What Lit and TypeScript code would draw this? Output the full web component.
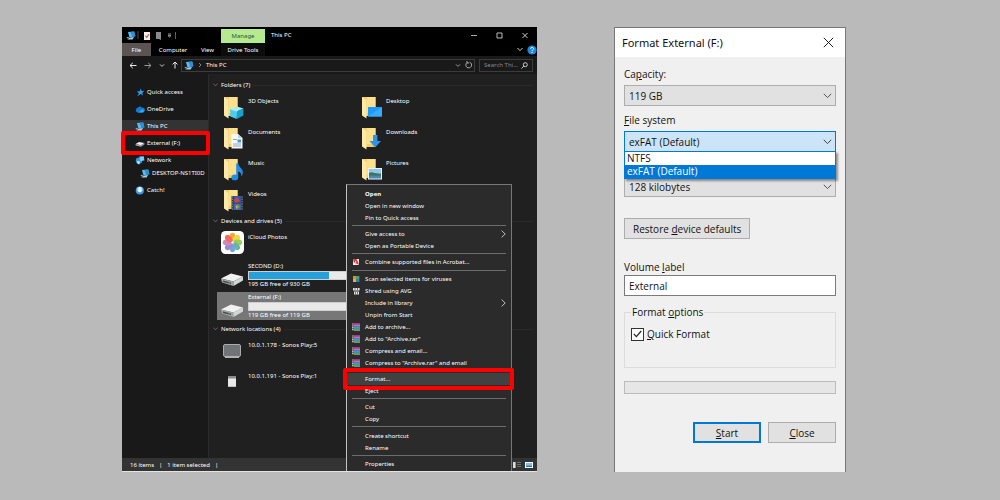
import { LitElement, html, svg, css, nothing } from "lit";
import { customElement, property } from "lit/decorators.js";
import { classMap } from "lit/directives/class-map.js";

const icon = (w: number, h: number, body: unknown) =>
  html`<svg width=${w} height=${h} viewBox="0 0 ${w} ${h}" fill="none" aria-hidden="true">${body}</svg>`;

const folderBase = svg`
  <path d="M4 2 H17.5 V21 H8 Z" fill="#f3cf6c"/>
  <path d="M9 2 H17.5 V18 H9 Z" fill="#fbe08d"/>
  <path d="M4 2 L8.5 5 V23.5 L4 20.5 Z" fill="#ffe9a8"/>`;

const pics: Record<string, unknown> = {
  pc: icon(10, 9, svg`
    <path d="M2 1 L8.2 .4 L9.4 5.2 L3.4 6.2 Z" fill="#57bdf5"/>
    <path d="M4.4 1 L8.2 .4 L9.4 5.2 L6.4 5.7 Z" fill="#2b8fd8"/>
    <path d="M3.6 6.6 L8 6 L6.6 8.4 L1.4 8.6 Z" fill="#a9cbe2"/>
    <path d="M.4 6.2 L2.4 5.8 L3 7 L1.4 7.6 Z" fill="#7fa7c4"/>`),
  star: icon(10, 9, svg`<path d="M5.8 .6 L6.7 3.1 L9.3 3.2 L7.2 4.9 L8 7.6 L5.7 6.1 L2 8.6 L4 5.6 L1.8 3.6 L4.7 3.2 Z" fill="#2e9df0"/>`),
  cloud: icon(10, 9, svg`
    <path d="M2.4 7.4 A2.2 2.2 0 0 1 2 3.3 A3 3 0 0 1 7 2.7 A2.4 2.4 0 0 1 8 7.4 Z" fill="#1479d0"/>
    <path d="M3 7.4 L7.8 4.2 A2 2 0 0 1 8 7.4 Z" fill="#39a9f3"/>`),
  disk: icon(10, 9, svg`
    <path d="M.6 5 L4 3 L9.4 4 L6 6.2 Z" fill="#eef0f2"/>
    <path d="M.6 5 L6 6.2 L9.4 4 V5.6 L6 7.8 L.6 6.6 Z" fill="#9da3a8"/>`),
  network: icon(10, 9, svg`
    <circle cx="4" cy="4.6" r="3.2" fill="#2f9be6"/>
    <path d="M4.4 .6 L8.8 .2 L9.4 4.4 L5.2 5 Z" fill="#7cccf8"/>
    <path d="M2 5 L5 5.6 L4.2 8.4 L2.6 7.8 Z" fill="#c6e6fa"/>`),
  catch: icon(10, 9, svg`
    <circle cx="4.8" cy="4.5" r="4.1" fill="#3f9ae8"/>
    <circle cx="4.8" cy="3.4" r="2.6" fill="#b9dcf8"/>
    <path d="M4.2 1.6 H5.6 V4.2 H7.2 L4.9 6.6 L2.6 4.2 H4.2 Z" fill="#fff"/>`),
  objects: icon(24, 24, svg`${folderBase}
    <path d="M10 14.5 L17 11.5 L23.4 13.4 L16.8 16.6 Z" fill="#a5ecfb"/>
    <path d="M10 14.5 L16.8 16.6 V24 L10.4 21.4 Z" fill="#48cdee"/>
    <path d="M16.8 16.6 L23.4 13.4 V20.6 L16.8 24 Z" fill="#1a9fd0"/>`),
  documents: icon(24, 24, svg`${folderBase}
    <path d="M11.5 8 H18 L22.5 12 V22.5 H11.5 Z" fill="#f6f8fa"/>
    <path d="M18 8 V12 H22.5 Z" fill="#c7d0d8"/>
    <path d="M13 13.5 H17 M13 18 H21 M13 20 H21" stroke="#8eaabc"/>
    <path d="M17.5 13.5 H21 V16.5 H17.5 Z" fill="#3d9fd6"/>`),
  music: icon(24, 24, svg`${folderBase}
    <ellipse cx="14.8" cy="20.4" rx="3.4" ry="2.9" fill="#1e8fe8"/>
    <path d="M16.2 6.5 H18.2 C18.6 10.4 23.4 11.4 22.8 16 C22.6 18 21.6 19 21.2 19.2 C21.8 16 20 15 18.2 14.4 V20.6 H16.2 Z" fill="#1e8fe8"/>`),
  videos: icon(24, 24, svg`${folderBase}
    <path d="M11.5 8 H23 V22 H11.5 Z" fill="#34383e"/>
    <path d="M13.6 8 H20.8 V14.6 H13.6 Z" fill="#3657b8"/>
    <path d="M13.6 15.4 H20.8 V22 H13.6 Z" fill="#4062c4"/>
    <path d="M14 12 L17 9 L20 13 L18 14.6 H15 Z" fill="#c8473c"/>
    <path d="M15 18 L18 16 L20.4 19 L17 21.6 Z" fill="#54a04a"/>
    <path d="M16 17 L18 19 L16 21 Z" fill="#e0a93a"/>
    <path d="M12.5 8.5 V22 M22 8.5 V22" stroke="#8e949b" stroke-dasharray="1 1.4"/>`),
  desktop: icon(24, 24, svg`${folderBase}
    <path d="M10 12 H24 V21.5 H10 Z" fill="#1c9bfa"/>
    <path d="M10 21.5 L24 12 V21.5 Z" fill="#38abff"/>`),
  downloads: icon(24, 24, svg`${folderBase}
    <path d="M15 9 H19.4 V15 H23 L17.2 21.5 L11.4 15 H15 Z" fill="#2f93e6"/>`),
  pictures: icon(24, 24, svg`${folderBase}
    <path d="M10 11 H24 V22.5 H10 Z" fill="#eef3f7"/>
    <path d="M11 12 H23 V17 H11 Z" fill="#8fc7ee"/>
    <path d="M11 16 C14 14 16 17 23 16.6 V19 H11 Z" fill="#3d7358"/>
    <path d="M11 18.6 H23 V21.5 H11 Z" fill="#4a89b4"/>`),
  photos: icon(24, 24, svg`
    <rect x="1" y="0" width="23" height="23" rx="4.5" fill="#fff"/>
    <g opacity=".86">
      ${["#f79a1d", "#e8d51b", "#8ac53f", "#4fae8d", "#5c9bd6", "#8a79c4", "#c678b4", "#ee5347"].map(
        (c, i) => svg`<ellipse cx="12.5" cy="6.2" rx="3" ry="4.4" fill=${c} transform="rotate(${i * 45} 12.5 11.5)"/>`)}
    </g>
    <circle cx="12.5" cy="11.5" r="1.2" fill="#fff" opacity=".7"/>`),
  drive: icon(24, 28, svg`
    <path d="M1 17.5 L11 12.5 L23 15.5 L13.5 20.5 Z" fill="#f1f1f1"/>
    <path d="M1 17.5 L13.5 20.5 V25 L2 21.6 Z" fill="#a3a5a6"/>
    <path d="M13.5 20.5 L23 15.5 V19.5 L13.5 25 Z" fill="#d3d5d6"/>
    <path d="M3 19.6 L11 21.6 V23 L3 20.9 Z" fill="#47494a"/>
    <path d="M8.5 21.4 H10 V22.6 H8.5 Z" fill="#5fc25c"/>`),
  play5: icon(24, 24, svg`
    <rect x="3.5" y="5.5" width="17" height="12" rx="1.5" fill="#717476" stroke="#a9abac"/>
    <path d="M5 18.3 H19" stroke="#d8d8d8"/>`),
  play1: icon(24, 24, svg`
    <path d="M8 6 H16 V17 H8 Z" fill="#e9e9e9"/>
    <path d="M8 6 H16 V8.5 H8 Z" fill="#8b8b8b"/>
    <path d="M8 16.4 H16" stroke="#bdbdbd"/>`),
  pdf: icon(8, 8, svg`
    <path d="M1 1 H7 V7 H1 Z" fill="#f4eaea"/>
    <path d="M1 1 H4.5 L6 4 L7 7 L4.5 5.5 L2 5 Z" fill="#d93a3a"/>
    <path d="M2 6.6 L4 3" stroke="#fff"/>`),
  avg: icon(8, 8, svg`
    <path d="M1 1 H4 V4 H1 Z" fill="#e8892e"/><path d="M4 1 H7.4 V4 H4 Z" fill="#4aa84a"/>
    <path d="M1 4 H4 V7 H1 Z" fill="#d9b53a"/><path d="M4 4 H7.4 V7 H4 Z" fill="#3978c8"/>`),
  shred: icon(8, 8, svg`
    <path d="M1 1 H7.6 V3.6 H1 Z M2 4.6 H7 V7.4 H2 Z" fill="#e4e4e4"/>
    <path d="M3 1 V3 M5.5 1 V3 M3.5 4.6 V7.4 M5.5 4.6 V7.4" stroke="#4c4c4c" stroke-width=".7"/>`),
  rar: icon(8, 8, svg`
    <path d="M1.5 .2 H8 V2.2 H1.5 Z" fill="#d0389a"/>
    <path d="M1.5 2.9 H8 V4.8 H1.5 Z" fill="#3f7fe0"/>
    <path d="M1.5 5.5 H8 V7.4 H1.5 Z" fill="#2fa866"/>
    <path d="M.8 .4 V7.8" stroke="#d8c8c0" stroke-width="1.4" stroke-dasharray="1.2 .6"/>
    <path d="M2 2.5 H8 M2 5.1 H8 M2 7.7 H8" stroke="#e8e8e8" stroke-width=".5"/>`),
};

const chevron = (stroke: string) => icon(9, 6, svg`<path d="M.8 .8 L4.5 4.6 L8.2 .8" stroke=${stroke}/>`);

/** Windows Explorer, dark theme, with an open context menu. */
@customElement("file-explorer")
export class FileExplorer extends LitElement {
  @property({ attribute: false }) nav = [
    { text: "Quick access", pic: "star" },
    { text: "OneDrive", pic: "cloud" },
    { text: "This PC", pic: "pc", current: true },
    { text: "External (F:)", pic: "disk", marked: true },
    { text: "Network", pic: "network" },
    { text: "DESKTOP-NS1TI0D", pic: "pc", child: true },
    { text: "Catch!", pic: "catch" },
  ];

  @property({ attribute: false }) folders = [
    ["3D Objects", "objects"], ["Desktop", "desktop"],
    ["Documents", "documents"], ["Downloads", "downloads"],
    ["Music", "music"], ["Pictures", "pictures"],
    ["Videos", "videos"],
  ];

  @property({ attribute: false }) menu: { text: string; pic?: string; sub?: boolean; bold?: boolean; marked?: boolean }[][] = [
    [{ text: "Open", bold: true }, { text: "Open in new window" }, { text: "Pin to Quick access" }],
    [{ text: "Give access to", sub: true }, { text: "Open as Portable Device" }],
    [{ text: "Combine supported files in Acrobat...", pic: "pdf" }],
    [
      { text: "Scan selected items for viruses", pic: "avg" },
      { text: "Shred using AVG", pic: "shred" },
      { text: "Include in library", sub: true },
      { text: "Unpin from Start" },
      { text: "Add to archive...", pic: "rar" },
      { text: 'Add to "Archive.rar"', pic: "rar" },
      { text: "Compress and email...", pic: "rar" },
      { text: 'Compress to "Archive.rar" and email', pic: "rar" },
    ],
    [{ text: "Format...", marked: true }, { text: "Eject" }],
    [{ text: "Cut" }, { text: "Copy" }],
    [{ text: "Create shortcut" }, { text: "Rename" }],
    [{ text: "Properties" }],
  ];

  static styles = css`
    :host {
      display: flex; flex-direction: column; position: relative;
      background: #202020; color: #fff; border-bottom: 1px solid #e4e4e4;
      font: 6px/12px "Noto Sans", "Open Sans", sans-serif;
    }
    * { box-sizing: border-box; }
    svg { display: block; flex: none; }
    button, input { font: inherit; color: inherit; background: none; border: 0; padding: 0; margin: 0; min-width: 0; }
    h2 { font: inherit; margin: 0; }
    a { color: inherit; text-decoration: none; }
    ul { list-style: none; margin: 0; padding: 0; }

    .top { display: grid; grid-template-columns: 99px 44px 1fr auto; grid-template-rows: 16px 13px; background: #000; }
    .quick { display: flex; align-items: center; gap: 1px; padding-left: 4px; }
    .manage { background: #b5ea90; color: #33512a; margin-top: 2px; text-align: center; line-height: 15px; }
    .title { padding-left: 6px; line-height: 16px; }
    .win { display: flex; align-items: center; gap: 19px; padding-right: 9px; }
    .tabs { display: flex; }
    .tabs button { padding: 0 8px; }
    .tabs .file { background: #5b5453; width: 30px; }
    .tools { background: #0c0c0c; white-space: nowrap; }
    .help { grid-column: 3 / 5; display: flex; justify-content: flex-end; align-items: center; gap: 4px; }

    .bar { display: flex; align-items: center; gap: 4px; height: 18px; padding: 0 4px 0 7px; background: #191919; }
    .arrows { display: flex; align-items: center; gap: 7px; width: 48px; flex: none; }
    .path { display: flex; flex: 1; align-items: center; gap: 4px; height: 13px; padding: 0 2px; border: 1px solid #3c3c3c; }
    .path .grow { flex: 1; }
    .search { display: flex; align-items: center; width: 54px; height: 13px; padding: 0 4px; border: 1px solid #3c3c3c; }
    .search input { flex: 1; width: 100%; height: 11px; }
    .search input::placeholder { color: #888; opacity: 1; }

    .body { display: flex; flex: 1; }
    nav { width: 87px; flex: none; padding-top: 12px; background: #191919; border-right: 1px solid #2b2b2b; }
    nav ul { display: flex; flex-direction: column; gap: 5px; }
    nav a { display: flex; align-items: center; gap: 2px; padding-left: 13px; white-space: nowrap; position: relative; }
    nav .current { background: #333; }
    nav .child { padding-left: 18px; margin-top: -4px; }
    nav .marked::after { content: ""; position: absolute; inset: -6px -2px -6px -1px; border: 4px solid #f00; border-radius: 2px; }

    main { flex: 1; padding: 5px 4px 0 4px; display: flex; flex-direction: column; gap: 3px; min-width: 0; }
    .head { display: flex; align-items: center; gap: 3px; margin-bottom: 4px; }
    .head::after { content: ""; flex: 1; height: 1px; background: #2a2a2a; }
    .tiles { display: grid; grid-template-columns: repeat(auto-fill, 138px); row-gap: 7px; padding-left: 4px; }
    .tile { display: flex; gap: 4px; height: 24px; padding-left: 3px; white-space: nowrap; }
    .single { grid-template-columns: 138px; }
    .devices { row-gap: 3px; }
    .devices .tile { height: 27px; }
    .devices .drive { height: 28px; }
    .selected { background: #777; }
    .info { flex: 1; line-height: 10px; }
    .info p { margin: 0; line-height: 9px; }
    .meter { height: 9px; background: #e9e9e9; border: 1px solid #cfcfcf; }
    .fill { height: 7px; background: #26a0da; }

    footer { display: flex; align-items: center; gap: 5px; height: 13px; padding: 0 4px 0 8px; background: #333; }
    footer .views { display: flex; gap: 4px; margin-left: auto; }

    .menu {
      position: absolute; top: 157px; bottom: 0; left: 54%; width: 40%;
      display: flex; flex-direction: column; justify-content: space-between;
      padding: 3px 0 1px; background: #2b2b2b; border: 1px solid #777; border-left-color: #c4c4c4; border-bottom: 0;
    }
    .menu hr { width: calc(100% - 10px); height: 1px; margin: 1px 5px 2px; border: 0; background: #6c6c6c; }
    .menu button { display: grid; grid-template-columns: 8px 1fr 5px; column-gap: 5px; align-items: center; height: 12px; padding: 0 5px; text-align: left; white-space: nowrap; position: relative; }
    .menu .bold { font-weight: 700; }
    .menu .marked { background: #414141; }
    .menu .marked::after { content: ""; position: absolute; inset: -5px -3px -5px -4px; border: 4px solid #f00; border-radius: 2px; }
  `;

  private heading(text: string) {
    return html`<h2 class="head">${icon(5, 4, svg`<path d="M.4 .6 L2.5 2.8 L4.6 .6" stroke="#777" stroke-width=".8"/>`)}${text}</h2>`;
  }

  private drive(name: string, free: string, used: number, selected = false) {
    return html`<div class=${classMap({ tile: true, drive: true, selected })}>
      ${pics.drive}
      <div class="info">${name}
        <div class="meter"><div class="fill" style="width:${used}%"></div></div>
        <p>${free}</p>
      </div>
    </div>`;
  }

  render() {
    return html`
      <header class="top">
        <div class="quick">
          ${pics.pc}
          ${icon(30, 9, svg`<path d="M1 0 V8" stroke="#666" stroke-width=".8"/>
            <path d="M7 1 H13 V9 H7 Z" fill="#f2f2f2"/><path d="M8.4 4.6 L9.8 6.4 L12 3" stroke="#e0633a" stroke-width="1.2"/>
            <path d="M19 1 H24 V9 L22 8 H19 Z" fill="#8a8a8a"/>`)}
          ${icon(12, 9, svg`<path d="M0 3 H3 M0 4.6 L1.5 6 L3 4.6 Z" stroke="#bbb" stroke-width=".8"/><path d="M7.5 1 V8" stroke="#777" stroke-width=".8"/>`)}
        </div>
        <div class="manage">Manage</div>
        <div class="title">This PC</div>
        <div class="win">
          ${icon(6, 7, svg`<path d="M0 3.5 H6" stroke="#aaa"/>`)}
          ${icon(7, 7, svg`<path d="M1 1 H6 V6 H1 Z" stroke="#bbb"/>`)}
          ${icon(6, 7, svg`<path d="M.5 1 L5.5 6 M5.5 1 L.5 6" stroke="#ccc"/>`)}
        </div>
        <div class="tabs"><button class="file">File</button><button>Computer</button><button>View</button></div>
        <button class="tools">Drive Tools</button>
        <div class="help">
          ${icon(6, 5, svg`<path d="M.5 1 L3 3.6 L5.5 1" stroke="#ccc"/>`)}
          ${icon(10, 10, svg`<circle cx="5" cy="5" r="4.6" fill="#2087dc"/><path d="M3.6 3.8 C3.6 2 6.6 2 6.5 3.8 C6.4 5 5 4.9 5 6.2 M5 7 V8" stroke="#fff"/>`)}
        </div>
      </header>

      <div class="bar">
        <div class="arrows">
          ${icon(8, 7, svg`<path d="M7.5 3.5 H1 M3.8 .8 L1 3.5 L3.8 6.2" stroke="#eee"/>`)}
          ${icon(8, 7, svg`<path d="M.5 3.5 H7 M4.2 .8 L7 3.5 L4.2 6.2" stroke="#999"/>`)}
          ${icon(6, 5, svg`<path d="M1 1.4 L3 3.4 L5 1.4" stroke="#ccc"/>`)}
          ${icon(6, 8, svg`<path d="M3 7.5 V1 M.6 3.4 L3 1 L5.4 3.4" stroke="#eee"/>`)}
        </div>
        <div class="path">
          ${pics.pc}
          ${icon(4, 6, svg`<path d="M1 1 L3 3 L1 5" stroke="#999" stroke-width=".8"/>`)}
          <span class="grow">This PC</span>
          ${icon(6, 5, svg`<path d="M1 1.4 L3 3.4 L5 1.4" stroke="#999"/>`)}
          ${icon(7, 8, svg`<path d="M4.6 1.2 A2.9 2.9 0 1 1 1.8 1.8 M1 1 H3 V3" stroke="#bbb" stroke-width=".9"/>`)}
        </div>
        <label class="search">
          <input type="text" placeholder="Search Thi..." aria-label="Search This PC" />
          ${icon(7, 7, svg`<circle cx="4.3" cy="2.7" r="2" stroke="#ccc"/><path d="M2.8 4.2 L.5 6.5" stroke="#ccc"/>`)}
        </label>
      </div>

      <div class="body">
        <nav>
          <ul>
            ${this.nav.map((n) => html`<li><a href="#" class=${classMap({ current: !!n.current, marked: !!n.marked, child: !!n.child })}>${pics[n.pic]}${n.text}</a></li>`)}
          </ul>
        </nav>
        <main>
          <section>
            ${this.heading("Folders (7)")}
            <div class="tiles">${this.folders.map(([t, p]) => html`<div class="tile">${pics[p]}<span>${t}</span></div>`)}</div>
          </section>
          <section>
            ${this.heading("Devices and drives (5)")}
            <div class="tiles single devices">
              <div class="tile">${pics.photos}<span>iCloud Photos</span></div>
              ${this.drive("SECOND (D:)", "195 GB free of 930 GB", 76)}
              ${this.drive("External (F:)", "119 GB free of 119 GB", 0, true)}
            </div>
          </section>
          <section>
            ${this.heading("Network locations (4)")}
            <div class="tiles single">
              <div class="tile">${pics.play5}<span>10.0.1.178 - Sonos Play:5</span></div>
              <div class="tile">${pics.play1}<span>10.0.1.191 - Sonos Play:1</span></div>
            </div>
          </section>
        </main>
      </div>

      <footer>
        <span>16 items</span><span>|</span><span>1 item selected</span><span>|</span>
        <div class="views">
          ${icon(8, 8, svg`<path d="M0 1 H2.6 V7 H0 Z" fill="#ddd"/><path d="M4 1.5 H8 M4 3.5 H8 M4 5.5 H8" stroke="#888" stroke-width=".7"/>`)}
          ${icon(8, 8, svg`<path d="M0 1 H8 V7 H0 Z" fill="#fff"/><path d="M1 2 H7 V4.5 H1 Z" fill="#7bbdf0"/><path d="M1 4.5 H7 V6 H1 Z" fill="#3b6f9c"/>`)}
        </div>
      </footer>

      <div class="menu" role="menu">
        ${this.menu.map((group, i) => html`
          ${i ? html`<hr />` : nothing}
          ${group.map((m) => html`<button role="menuitem" class=${classMap({ bold: !!m.bold, marked: !!m.marked })}>
            <span>${m.pic ? pics[m.pic] : nothing}</span><span>${m.text}</span>
            ${m.sub ? icon(5, 8, svg`<path d="M.6 .6 L4.2 4 L.6 7.4" stroke="#ccc" stroke-width=".9"/>`) : nothing}
          </button>`)}
        `)}
      </div>
    `;
  }
}

/** The Windows "Format" dialog, with its file system list dropped down. */
@customElement("format-dialog")
export class FormatDialog extends LitElement {
  static styles = css`
    :host {
      display: flex; flex-direction: column; background: #f0f0f0; color: #111;
      border: 1px solid #777; border-bottom: 0;
      font: 10px/14px "Open Sans", "Noto Sans", sans-serif;
    }
    * { box-sizing: border-box; }
    svg { display: block; }
    u { text-underline-offset: 1px; }
    button, input, select { font: inherit; color: inherit; margin: 0; border-radius: 0; }
    header { display: flex; align-items: center; justify-content: space-between; height: 29px; padding: 0 11px 0 7px; background: #fff; font: 11px/14px "Noto Sans", sans-serif; }
    header button { border: 0; padding: 0; background: none; }
    form { display: flex; flex-direction: column; padding: 10px 9px 29px; flex: 1; }
    .combo { position: relative; display: block; margin: 4px 0 7px; }
    .unit { margin-top: 17px; }
    .combo > svg { position: absolute; right: 4px; top: 8px; pointer-events: none; }
    select { display: block; appearance: none; width: 100%; height: 21px; padding: 0 4px; border: 1px solid #adadad; background: #e1e1e1; }
    .open { background: #cce4f7; border-color: #0078d7; }
    .list { position: absolute; z-index: 1; top: 20px; left: 0; right: 0; margin: 0; padding: 0; list-style: none; line-height: 13px; border: 1px solid #0078d7; background: #fff; box-shadow: 2px 2px 2px #0006; }
    .list li { padding: 0 2px; }
    .list .on { background: #0078d7; color: #fff; }
    .push { border: 1px solid #adadad; background: #e1e1e1; height: 21px; padding: 0 8px; }
    .restore { align-self: flex-start; margin: 14px 0 21px; }
    .text { width: 100%; height: 21px; margin: 1px 0 9px; padding: 0 4px; border: 1px solid #7a7a7a; background: #fff; }
    fieldset { margin: 0 0 13px; padding: 8px 6px 26px; border: 1px solid #dcdcdc; }
    legend { padding: 0 1px; }
    .check { display: flex; align-items: center; gap: 3px; position: relative; }
    .check input { appearance: none; width: 13px; height: 13px; border: 1px solid #333; background: #fff; }
    .check svg { position: absolute; left: 2px; top: 3px; pointer-events: none; }
    .progress { height: 13px; border: 1px solid #bcbcbc; background: #e6e6e6; }
    .actions { display: flex; justify-content: flex-end; gap: 7px; margin-top: auto; }
    .actions .push { width: 68px; }
    .actions .start { border: 2px solid #0078d7; }
  `;

  render() {
    return html`
      <header>
        <span>Format External (F:)</span>
        <button aria-label="Close window">${icon(11, 11, svg`<path d="M.8 .8 L10.2 10.2 M10.2 .8 L.8 10.2" stroke="#222"/>`)}</button>
      </header>
      <form>
        <label for="capacity">Ca<u>p</u>acity:</label>
        <div class="combo">
          <select id="capacity"><option>119 GB</option></select>
          ${chevron("#555")}
        </div>
        <label for="fs"><u>F</u>ile system</label>
        <div class="combo">
          <select id="fs" class="open"><option>exFAT (Default)</option><option>NTFS</option></select>
          ${chevron("#444")}
          <ul class="list" role="listbox" aria-label="File system">
            <li role="option" aria-selected="false">NTFS</li>
            <li role="option" aria-selected="true" class="on">exFAT (Default)</li>
          </ul>
        </div>
        <div class="combo unit">
          <select aria-label="Allocation unit size"><option>128 kilobytes</option></select>
          ${chevron("#555")}
        </div>
        <button type="button" class="push restore">Restore <u>d</u>evice defaults</button>
        <label for="volume">Volume <u>l</u>abel</label>
        <input id="volume" class="text" .value=${"External"} />
        <fieldset>
          <legend>Format <u>o</u>ptions</legend>
          <label class="check"><input type="checkbox" checked />${icon(9, 8, svg`<path d="M.8 3.8 L3.4 6.6 L8.2 1" stroke="#222" stroke-width="1.2"/>`)}<span><u>Q</u>uick Format</span></label>
        </fieldset>
        <div class="progress" role="progressbar" aria-label="Format progress"></div>
        <div class="actions">
          <button type="button" class="push start"><u>S</u>tart</button>
          <button type="button" class="push"><u>C</u>lose</button>
        </div>
      </form>
    `;
  }
}

@customElement("app-root")
export class AppRoot extends LitElement {
  static styles = css`
    :host {
      display: grid; box-sizing: border-box; min-height: 100vh;
      grid-template-columns: minmax(380px, 415fr) minmax(220px, 232fr);
      column-gap: 77px; padding: 27px 154px 28px 122px;
      background: #bababa;
    }
  `;

  render() {
    return html`<file-explorer></file-explorer><format-dialog></format-dialog>`;
  }
}
